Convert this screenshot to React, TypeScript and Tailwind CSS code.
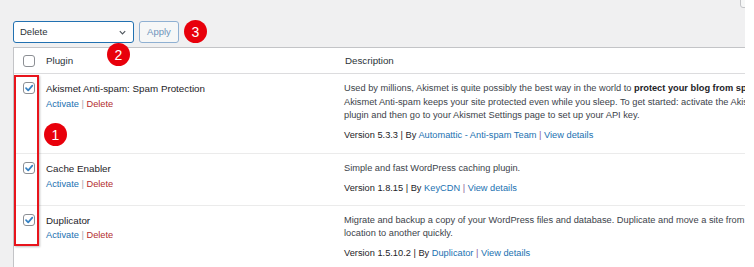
type Plugin = {
  name: string;
  lines: React.ReactNode[];
  version: string;
  author: string;
  pad: string;
};

const plugins: Plugin[] = [
  {
    name: "Akismet Anti-spam: Spam Protection",
    lines: [
      <>
        Used by millions, Akismet is quite possibly the best way in the world to{" "}
        <strong className="font-bold text-[#1d2327]">protect your blog from spam</strong>.
      </>,
      "Akismet Anti-spam keeps your site protected even while you sleep. To get started: activate the Akismet",
      "plugin and then go to your Akismet Settings page to set up your API key.",
    ],
    version: "5.3.3",
    author: "Automattic - Anti-spam Team",
    pad: "pt-[8px] pb-[10.5px]",
  },
  {
    name: "Cache Enabler",
    lines: ["Simple and fast WordPress caching plugin."],
    version: "1.8.15",
    author: "KeyCDN",
    pad: "pt-[8px] pb-[9px]",
  },
  {
    name: "Duplicator",
    lines: [
      "Migrate and backup a copy of your WordPress files and database. Duplicate and move a site from one",
      "location to another quickly.",
    ],
    version: "1.5.10.2",
    author: "Duplicator",
    pad: "pt-[8px] pb-[9px]",
  },
];

const Checkbox = ({ checked }: { checked?: boolean }) => (
  <div className="w-[12px] h-[12px] border border-[#8c8f94] rounded-[3px] bg-white flex items-center justify-center">
    {checked && (
      <svg width="10" height="10" viewBox="0 0 10 10">
        <path d="M2 5.2 L4.2 7.4 L8.3 2.6" fill="none" stroke="#3582c4" strokeWidth="1.7" strokeLinecap="round" strokeLinejoin="round" />
      </svg>
    )}
  </div>
);

const Badge = ({ n, className }: { n: number; className: string }) => (
  <div className={`w-[23px] h-[23px] rounded-full bg-[#e8000b] text-white text-[14px] leading-none flex items-center justify-center ${className}`}>
    {n}
  </div>
);

export default function App() {
  return (
    <div className="flex w-[754px] h-[267px] overflow-hidden bg-white font-['Liberation_Sans',Arial,sans-serif] text-[9.25px] leading-[13.5px] text-[#3c434a]">
      <div className="relative w-[745px] h-full shrink-0 bg-[#f0f0f1] overflow-hidden">
        <div className="absolute left-[740px] top-[-16px] w-[20px] h-[24px] border border-[#c3c4c7] rounded-[3px] bg-[#f6f7f7]" />

        <div className="h-[47px] pl-[13px] pt-[21px] flex items-start">
          <div className="w-[121px] h-[22px] border border-[#2271b1] rounded-[3px] bg-white flex items-center justify-between pl-[6px] pr-[6px] text-[9.5px] text-[#2c3338]">
            <span>Delete</span>
            <svg width="9" height="9" viewBox="0 0 10 10">
              <path d="M2 3.5 L5 6.5 L8 3.5" fill="none" stroke="#50575e" strokeWidth="1.3" />
            </svg>
          </div>
          <div className="ml-[5px] w-[40px] h-[22px] border border-[#8fb0d2] rounded-[3px] bg-[#f6f7f7] text-[#6f93bb] text-[9.5px] flex items-center justify-center">
            Apply
          </div>
          <Badge n={3} className="ml-[5px] mt-[-1px]" />
        </div>

        <div className="ml-[13px] bg-white border-l border-t border-[#c3c4c7] flex flex-col">
          <div className="h-[26px] shrink-0 border-b border-[#dcdcde] flex items-center">
            <div className="w-[32px] pl-[9px]">
              <Checkbox />
            </div>
            <div className="w-[298px] text-[9.75px] text-[#2c3338]">Plugin</div>
            <div className="pl-[1px] text-[9.75px] text-[#2c3338]">Description</div>
          </div>

          {plugins.map((p) => (
            <div key={p.name} className={`flex shrink-0 border-b border-[#ebebeb] ${p.pad}`}>
              <div className="w-[32px] pl-[9px] shrink-0">
                <Checkbox checked />
              </div>
              <div className="w-[298px] shrink-0">
                <div className="text-[#1d2327] text-[9.8px]">{p.name}</div>
                <div className="pt-[2px] text-[#a7aaad]">
                  <span className="text-[#2271b1]">Activate</span> | <span className="text-[#b32d2e]">Delete</span>
                </div>
              </div>
              <div className="whitespace-nowrap">
                {p.lines.map((l, i) => (
                  <div key={i}>{l}</div>
                ))}
                <div className="mt-[6.5px] text-[#1d2327]">
                  Version {p.version} | By <span className="text-[#2271b1]">{p.author}</span>{" "}
                  <span className="text-[#8c5b9e]">|</span> <span className="text-[#2271b1]">View details</span>
                </div>
              </div>
            </div>
          ))}
        </div>

        <div className="absolute left-[14px] top-[75px] w-[25px] h-[171px] border-2 border-[#e8141c] shadow-[1px_1px_2px_rgba(0,0,0,0.25)]" />
        <Badge n={2} className="absolute left-[107px] top-[43px]" />
        <Badge n={1} className="absolute left-[44px] top-[123px]" />
      </div>
    </div>
  );
}
